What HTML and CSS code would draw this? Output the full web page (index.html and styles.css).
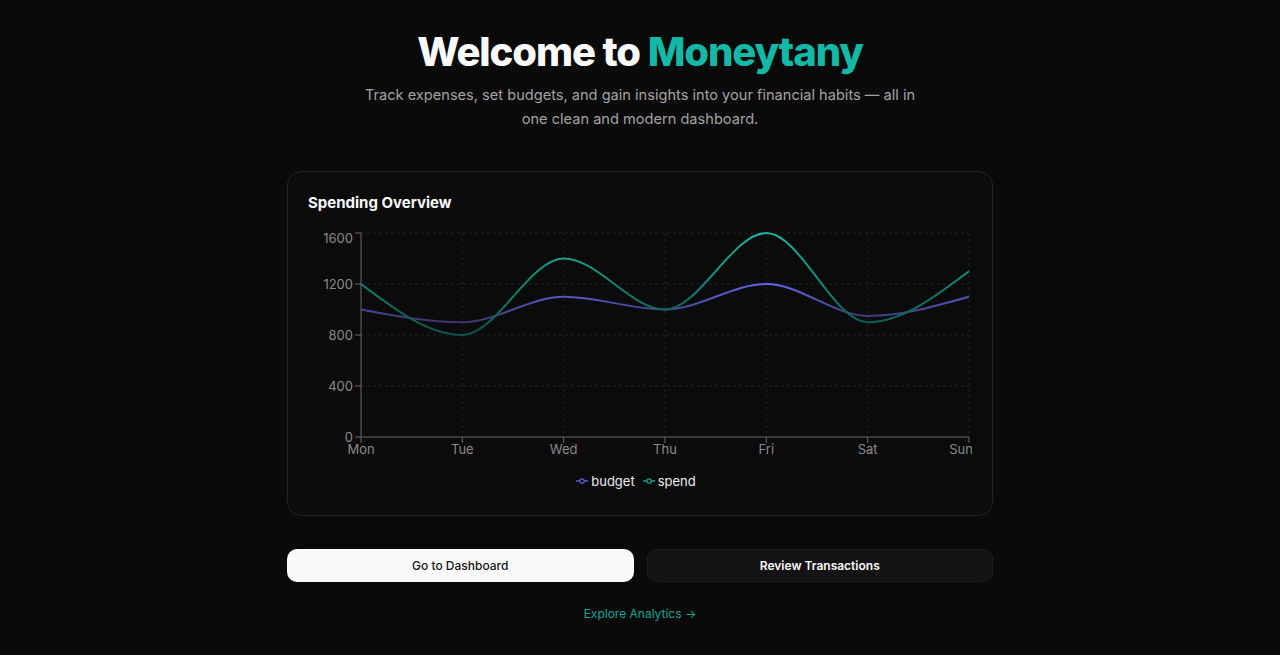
FILE: index.html
```html
<!DOCTYPE html>
<html lang="en">
<head>
<meta charset="utf-8">
<title>Moneytany</title>
<link rel="stylesheet" href="styles.css">
</head>
<body>
<main class="page">
  <h1 class="title">Welcome to <span class="brand">Moneytany</span></h1>
  <p class="lead">Track expenses, set budgets, and gain insights into your financial habits — all in one clean and modern dashboard.</p>

  <section class="card">
    <h2 class="card-title">Spending Overview</h2>
    <svg class="chart" width="664" height="240" viewBox="0 0 664 240">
      <defs>
        <linearGradient id="gSpend" x1="0" y1="0" x2="0" y2="1">
          <stop offset="0" stop-color="#19b49f"/>
          <stop offset="1" stop-color="#0e5249"/>
        </linearGradient>
        <linearGradient id="gBudget" x1="0" y1="0" x2="0" y2="1">
          <stop offset="0" stop-color="#6464e6"/>
          <stop offset="1" stop-color="#38386e"/>
        </linearGradient>
      </defs>
      <g class="grid">
        <line x1="53" y1="10" x2="661" y2="10"/>
        <line x1="53" y1="61" x2="661" y2="61"/>
        <line x1="53" y1="112" x2="661" y2="112"/>
        <line x1="53" y1="163" x2="661" y2="163"/>
        <line x1="154.33" y1="10" x2="154.33" y2="214"/>
        <line x1="255.67" y1="10" x2="255.67" y2="214"/>
        <line x1="357" y1="10" x2="357" y2="214"/>
        <line x1="458.33" y1="10" x2="458.33" y2="214"/>
        <line x1="559.67" y1="10" x2="559.67" y2="214"/>
        <line x1="661" y1="10" x2="661" y2="214"/>
      </g>
      <g class="axis">
        <line x1="53" y1="10" x2="53" y2="214"/>
        <line x1="53" y1="214" x2="661" y2="214"/>
        <line x1="47" y1="10" x2="53" y2="10"/>
        <line x1="47" y1="61" x2="53" y2="61"/>
        <line x1="47" y1="112" x2="53" y2="112"/>
        <line x1="47" y1="163" x2="53" y2="163"/>
        <line x1="47" y1="214" x2="53" y2="214"/>
        <line x1="53" y1="214" x2="53" y2="220"/>
        <line x1="154.33" y1="214" x2="154.33" y2="220"/>
        <line x1="255.67" y1="214" x2="255.67" y2="220"/>
        <line x1="357" y1="214" x2="357" y2="220"/>
        <line x1="458.33" y1="214" x2="458.33" y2="220"/>
        <line x1="559.67" y1="214" x2="559.67" y2="220"/>
        <line x1="661" y1="214" x2="661" y2="220"/>
      </g>
      <g class="ylabels">
        <text x="45" y="20">1600</text>
        <text x="45" y="66">1200</text>
        <text x="45" y="117">800</text>
        <text x="45" y="168">400</text>
        <text x="45" y="219">0</text>
      </g>
      <g class="xlabels">
        <text x="53" y="231">Mon</text>
        <text x="154.33" y="231">Tue</text>
        <text x="255.67" y="231">Wed</text>
        <text x="357" y="231">Thu</text>
        <text x="458.33" y="231">Fri</text>
        <text x="559.67" y="231">Sat</text>
        <text x="653" y="231">Sun</text>
      </g>
      <path class="line" stroke="url(#gBudget)" d="M53,86.5 C86.78,92.875 120.56,99.25 154.33,99.25 C188.11,99.25 221.89,73.75 255.67,73.75 C289.44,73.75 323.22,86.5 357,86.5 C390.78,86.5 424.56,61 458.33,61 C492.11,61 525.89,92.875 559.67,92.875 C593.44,92.875 627.22,83.31 661,73.75"/>
      <path class="line" stroke="url(#gSpend)" d="M53,61 C86.78,86.5 120.56,112 154.33,112 C188.11,112 221.89,35.5 255.67,35.5 C289.44,35.5 323.22,86.5 357,86.5 C390.78,86.5 424.56,10 458.33,10 C492.11,10 525.89,99.25 559.67,99.25 C593.44,99.25 627.22,73.75 661,48.25"/>
    </svg>
    <div class="legend">
      <span class="legend-item">
        <svg class="legend-icon" width="12" height="10" viewBox="0 0 12 10"><line x1="0" y1="5" x2="12" y2="5" stroke="#5b5bd6" stroke-width="1.5"/><circle cx="6" cy="5" r="2.2" fill="#0b0b0b" stroke="#5b5bd6" stroke-width="1.3"/></svg>
        budget
      </span>
      <span class="legend-item">
        <svg class="legend-icon" width="12" height="10" viewBox="0 0 12 10"><line x1="0" y1="5" x2="12" y2="5" stroke="#14a08f" stroke-width="1.5"/><circle cx="6" cy="5" r="2.2" fill="#0b0b0b" stroke="#14a08f" stroke-width="1.3"/></svg>
        spend
      </span>
    </div>
  </section>

  <div class="actions">
    <a class="btn btn-light" href="#">Go to Dashboard</a>
    <a class="btn btn-dark" href="#">Review Transactions</a>
  </div>
  <a class="explore" href="#">Explore Analytics →</a>
</main>
</body>
</html>
```
FILE: styles.css
```css
* { box-sizing: border-box; }
html, body { margin: 0; padding: 0; }
body {
  background: #0a0a0a;
  color: #fafafa;
  font-family: Inter, "Liberation Sans", sans-serif;
  min-height: 655px;
}
.page {
  width: 706px;
  margin: 0 auto;
  padding-top: 28px;
  display: flex;
  flex-direction: column;
  align-items: center;
}
.title {
  margin: 0;
  font-size: 40px;
  line-height: 48px;
  font-weight: 800;
  letter-spacing: -1.1px;
  color: #fafafa;
}
.brand { color: #14b8a6; }
.lead {
  margin: 7px 0 0;
  max-width: 570px;
  text-align: center;
  font-size: 14.6px;
  line-height: 24px;
  color: #a3a3a3;
}
.card {
  margin-top: 40px;
  width: 706px;
  border: 1px solid #232323;
  border-radius: 14px;
  background: #0b0b0b;
  padding: 20px 20px 25px;
}
.card-title {
  margin: 0 0 9px;
  font-size: 15px;
  line-height: 22px;
  font-weight: 700;
  color: #fafafa;
}
.chart { display: block; }
.grid line { stroke: #222; stroke-width: 1; stroke-dasharray: 3 3; }
.axis line { stroke: #6b6b6b; stroke-width: 1; }
.ylabels text, .xlabels text {
  font-family: Inter, "Liberation Sans", sans-serif;
  font-size: 13px;
  fill: #8a8a8a;
}
.ylabels text { text-anchor: end; }
.xlabels text { text-anchor: middle; }
.line { fill: none; stroke-width: 2; }
.legend {
  margin-top: 9px;
  padding-right: 8px;
  display: flex;
  justify-content: center;
  gap: 8px;
  font-size: 13px;
  line-height: 18px;
  color: #ededed;
}
.legend-item { display: flex; align-items: center; gap: 3px; }
.legend-icon { display: block; }
.actions {
  margin-top: 33px;
  width: 706px;
  display: grid;
  grid-template-columns: 1fr 1fr;
  gap: 13px;
}
.btn {
  height: 33px;
  border-radius: 10px;
  display: flex;
  align-items: center;
  justify-content: center;
  font-size: 12px;
  text-decoration: none;
}
.btn-light { background: #fafafa; color: #141414; font-weight: 500; }
.btn-dark { background: #131313; color: #fafafa; border: 1px solid #1e1e1e; font-weight: 600; }
.explore {
  margin-top: 23px;
  font-size: 12px;
  line-height: 18px;
  color: #14a394;
  text-decoration: none;
}
```
